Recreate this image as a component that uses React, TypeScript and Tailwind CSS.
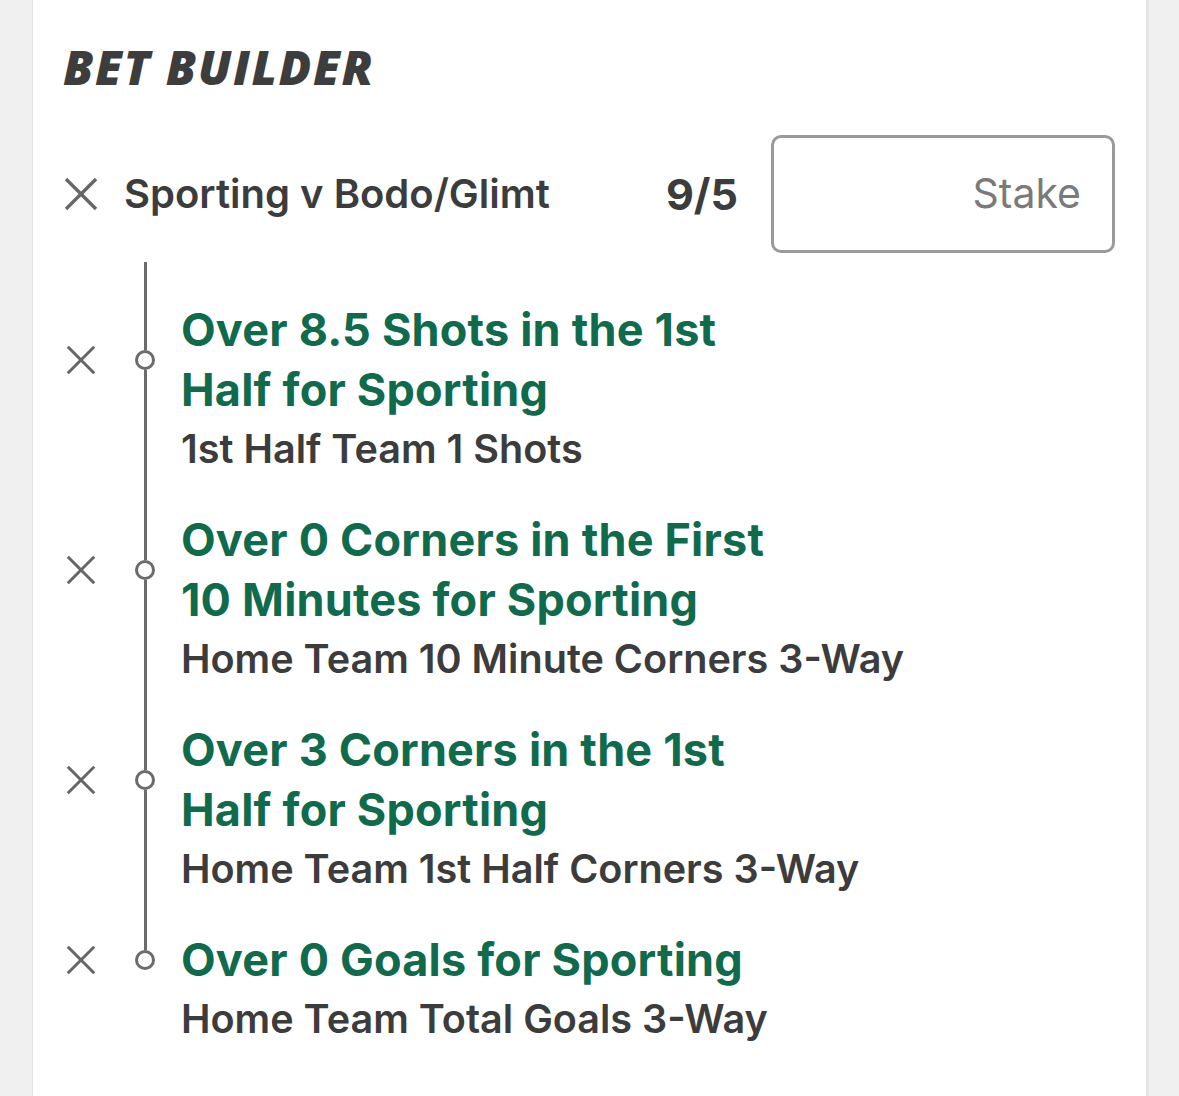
import React from 'react';

const GREEN = 'text-[#0f6b4c]';

const CloseIcon = ({ size }: { size: number }) => (
  <svg width={size} height={size} viewBox="0 0 32 32" fill="none" stroke="#666" strokeWidth={3.2} strokeLinecap="square">
    <line x1="3" y1="3" x2="29" y2="29" />
    <line x1="29" y1="3" x2="3" y2="29" />
  </svg>
);

interface Leg {
  title: string[];
  market: string;
}

const legs: Leg[] = [
  { title: ['Over 8.5 Shots in the 1st', 'Half for Sporting'], market: '1st Half Team 1 Shots' },
  { title: ['Over 0 Corners in the First', '10 Minutes for Sporting'], market: 'Home Team 10 Minute Corners 3-Way' },
  { title: ['Over 3 Corners in the 1st', 'Half for Sporting'], market: 'Home Team 1st Half Corners 3-Way' },
  { title: ['Over 0 Goals for Sporting'], market: 'Home Team Total Goals 3-Way' },
];

// vertical segment of the timeline, stretches inside a flex column
const Line = () => <div className="w-[3px] bg-[#6b6b6b] flex-1" />;

const LegRow = ({ leg, first, last }: { leg: Leg; first: boolean; last: boolean }) => (
  <div className="flex flex-col">
    {/* connector above */}
    <div className={`flex ${first ? 'h-[38px]' : 'h-[31px]'}`}>
      <div className="w-[36px]" />
      <div className="ml-[36px] w-[20px] flex flex-col items-center">
        <Line />
      </div>
    </div>
    {/* title */}
    <div className="flex items-stretch">
      <div className="w-[36px] flex items-center justify-center">
        <CloseIcon size={30} />
      </div>
      <div className="ml-[36px] w-[20px] flex flex-col items-center">
        <Line />
        <div className="w-[20px] h-[20px] rounded-full border-[3px] border-[#6b6b6b] bg-white shrink-0" />
        {last ? <div className="flex-1" /> : <Line />}
      </div>
      <div className={`ml-[26px] ${GREEN} font-bold text-[45px] leading-[60px] tracking-[0.2px]`}>
        {leg.title.map((t) => (
          <div key={t}>{t}</div>
        ))}
      </div>
    </div>
    {/* market */}
    <div className="flex">
      <div className="w-[36px]" />
      <div className="ml-[36px] w-[20px] flex flex-col items-center">{!last && <Line />}</div>
      <div className="ml-[26px] text-[#3c3c3c] font-semibold text-[39.6px] leading-[59px]">{leg.market}</div>
    </div>
  </div>
);

export default function App() {
  return (
    <div className="w-full h-[1096px] bg-[#f0f0f0] flex overflow-hidden" style={{ fontFamily: 'Inter, "Noto Sans", sans-serif' }}>
      <div className="ml-[32px] w-[1117px] bg-white border-l border-[#e2e2e2] border-r-[3px] border-r-[#e6e6e6] pl-[30px] pr-[31px] pt-[38px]">
        <h1
          className="text-[#3d3d3d] text-[48px] leading-[58px] font-extrabold italic tracking-[1.6px]"
          style={{ fontFamily: '"Open Sans", Lato, sans-serif' }}
        >
          BET BUILDER
        </h1>

        <div className="mt-[39px] flex items-center">
          <div className="w-[36px] flex items-center justify-center">
            <CloseIcon size={34} />
          </div>
          <div className="ml-[25px] text-[#3c3c3c] font-semibold text-[40px]">Sporting v Bodo/Glimt</div>
          <div className="flex-1" />
          <div className="text-[#3c3c3c] font-bold text-[43px]">9/5</div>
          <div className="ml-[33px] w-[344px] h-[118px] rounded-[10px] border-[3px] border-[#9a9a9a] flex items-center justify-end pr-[31px]">
            <span className="text-[#7a7a7a] text-[41px]">Stake</span>
          </div>
        </div>

        <div className="mt-[9px]">
          {legs.map((leg, i) => (
            <LegRow key={i} leg={leg} first={i === 0} last={i === legs.length - 1} />
          ))}
        </div>
      </div>
    </div>
  );
}
